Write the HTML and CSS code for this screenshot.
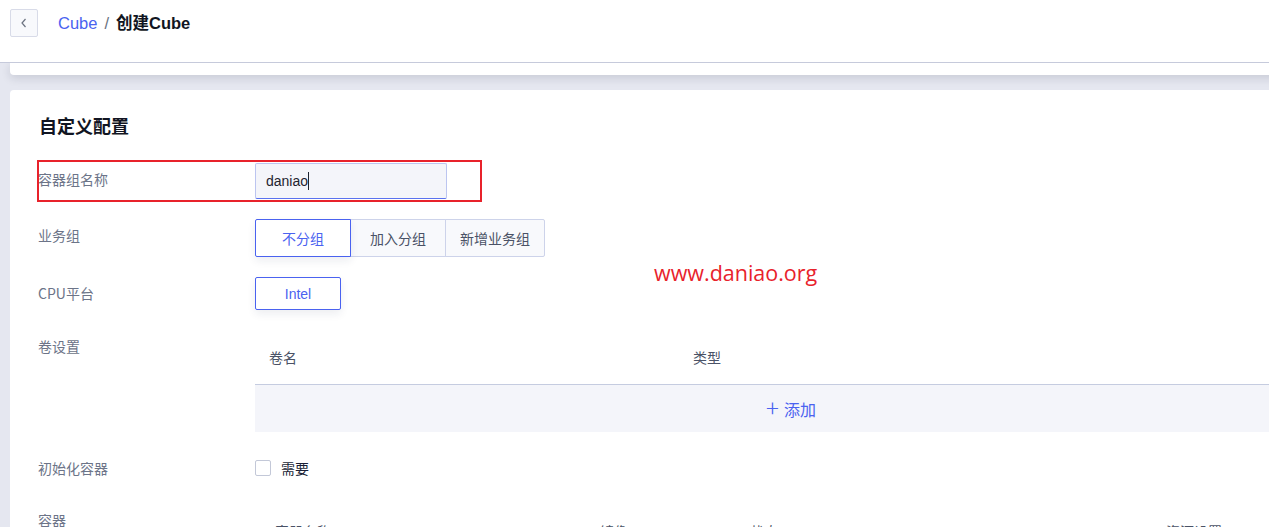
FILE: index.html
```html
<!DOCTYPE html>
<html lang="zh">
<head>
<meta charset="utf-8">
<title>创建Cube</title>
<link rel="stylesheet" href="styles.css">
</head>
<body>
<header class="topbar">
  <button class="back" aria-label="返回">
    <svg width="10" height="12" viewBox="0 0 10 12"><path d="M6.5 2 L3 6 L6.5 10" fill="none" stroke="#6b7280" stroke-width="1.2"/></svg>
  </button>
  <nav class="crumbs">
    <a class="crumb-link">Cube</a>
    <span class="crumb-sep">/</span>
    <span class="crumb-cur">创建Cube</span>
  </nav>
</header>
<main class="main">
  <div class="card stub"></div>
  <section class="card form-card">
    <h2 class="title">自定义配置</h2>
    <div class="row row-name">
      <div class="label">容器组名称</div>
      <div class="control">
        <div class="input"><span class="input-text">daniao</span></div>
      </div>
      <div class="mark"></div>
    </div>
    <div class="row">
      <div class="label">业务组</div>
      <div class="control">
        <div class="seg">
          <span class="seg-btn active w96">不分组</span>
          <span class="seg-btn w95">加入分组</span>
          <span class="seg-btn w99">新增业务组</span>
        </div>
      </div>
    </div>
    <div class="row">
      <div class="label">CPU平台</div>
      <div class="control">
        <span class="single-btn">Intel</span>
      </div>
    </div>
    <div class="row">
      <div class="label">卷设置</div>
      <div class="control">
        <div class="vtable">
          <div class="vhead">
            <span>卷名</span>
            <span>类型</span>
            <span></span>
          </div>
          <div class="vadd"><span class="plus">+</span>添加</div>
        </div>
      </div>
    </div>
    <div class="row">
      <div class="label">初始化容器</div>
      <div class="control check-line">
        <span class="checkbox"></span>
        <span class="check-text">需要</span>
      </div>
    </div>
    <div class="row">
      <div class="label">容器</div>
      <div class="control">
        <div class="chead">
          <span class="c1">容器名称</span>
          <span class="c2">镜像</span>
          <span class="c3">状态</span>
          <span class="c4">资源设置</span>
        </div>
      </div>
    </div>
  </section>
</main>
<div class="watermark">www.daniao.org</div>
</body>
</html>
```
FILE: styles.css
```css
* { box-sizing: border-box; }
html, body {
  margin: 0;
  padding: 0;
  width: 1269px;
  height: 527px;
  overflow: hidden;
}
body {
  background: #e5e7f0;
  font-family: "Liberation Sans", "Noto Sans CJK SC", sans-serif;
  color: #1f2430;
  position: relative;
}
.topbar {
  height: 63px;
  background: #fff;
  border-bottom: 1px solid #c6cadb;
  display: flex;
  align-items: flex-start;
  padding: 9px 0 0 10px;
  position: relative;
  z-index: 2;
}
.back {
  width: 28px;
  height: 28px;
  border: 1px solid #d8dbe8;
  border-radius: 2px;
  background: #f8f9fc;
  display: flex;
  align-items: center;
  justify-content: center;
  padding: 0;
}
.crumbs {
  margin-left: 20px;
  display: flex;
  align-items: center;
  height: 28px;
  font-size: 16.5px;
  line-height: 28px;
}
.crumb-link { color: #4a62f0; }
.crumb-sep { color: #6b7280; margin: 0 7px 0 7px; }
.crumb-cur { font-weight: bold; color: #111522; }

.main {
  width: 1400px;
  padding-left: 10px;
}
.card {
  background: #fff;
}
.stub {
  height: 12px;
  border-radius: 0 0 4px 4px;
  box-shadow: 0 3px 10px rgba(20, 25, 50, 0.14);
  margin-bottom: 15px;
  position: relative;
  z-index: 1;
}
.form-card {
  border-radius: 4px 4px 0 0;
  padding: 22px 0 40px 28px;
}
.title {
  margin: 0 0 25px 1px;
  font-size: 18px;
  line-height: 26px;
  font-weight: bold;
  color: #111522;
  font-family: "Noto Sans CJK SC", sans-serif;
}
.row {
  display: grid;
  grid-template-columns: 217px 1fr;
  margin-bottom: 20px;
  position: relative;
}
.label {
  font-size: 14px;
  line-height: 32px;
  color: #6c7488;
  font-family: "Noto Sans CJK SC", sans-serif;
}
.control { display: flex; }
.input {
  width: 192px;
  height: 36px;
  background: #f4f5fa;
  border: 1px solid #bcc5f0;
  border-bottom-color: #5a72ef;
  border-radius: 2px;
  padding: 0 10px;
  display: flex;
  align-items: center;
  font-size: 14px;
  color: #1f2430;
}
.input-text { border-right: 1px solid #1f2430; line-height: 18px; }
.mark {
  position: absolute;
  left: -1px;
  top: -3px;
  width: 445px;
  height: 42px;
  border: 2px solid #e8222b;
  pointer-events: none;
}
.seg { display: flex; }
.seg-btn {
  height: 38px;
  display: flex;
  align-items: center;
  justify-content: center;
  font-size: 14px;
  color: #4a5266;
  background: #f8f9fc;
  border: 1px solid #cdd3ea;
  margin-left: -1px;
  font-family: "Noto Sans CJK SC", sans-serif;
}
.seg-btn:first-child { margin-left: 0; border-radius: 2px 0 0 2px; }
.seg-btn:last-child { border-radius: 0 2px 2px 0; }
.seg-btn.active {
  background: #fff;
  color: #4a62f0;
  border-color: #4a62f0;
  box-shadow: 0 4px 8px rgba(30, 40, 80, 0.08);
  position: relative;
  z-index: 1;
}
.w96 { width: 96px; }
.w95 { width: 96px; }
.w99 { width: 100px; }
.single-btn {
  width: 86px;
  height: 33px;
  display: flex;
  align-items: center;
  justify-content: center;
  background: #fff;
  border: 1px solid #4a62f0;
  border-radius: 2px;
  color: #4a62f0;
  font-size: 14px;
  box-shadow: 0 4px 8px rgba(30, 40, 80, 0.08);
}
.vtable { width: 1072px; }
.vhead {
  height: 55px;
  display: grid;
  grid-template-columns: 424px 424px 1fr;
  align-items: center;
  padding-left: 14px;
  border-bottom: 1px solid #c5cce0;
  font-size: 14px;
  color: #4a5266;
  font-family: "Noto Sans CJK SC", sans-serif;
}
.vadd {
  height: 47px;
  background: #f4f5fa;
  display: flex;
  align-items: center;
  justify-content: center;
  color: #4a62f0;
  font-size: 16px;
  font-family: "Noto Sans CJK SC", sans-serif;
}
.plus { font-size: 24px; font-weight: 200; margin-right: 5px; line-height: 1; margin-top: -3px; }
.check-line { align-items: center; height: 32px; }
.checkbox {
  width: 16px;
  height: 16px;
  border: 1px solid #c3c8d8;
  border-radius: 2px;
  background: #fff;
}
.check-text {
  margin-left: 10px;
  font-size: 14px;
  color: #1a1f36;
  font-family: "Noto Sans CJK SC", sans-serif;
}
.chead {
  height: 54px;
  width: 1072px;
  font-size: 14px;
  color: #4a5266;
  font-family: "Noto Sans CJK SC", sans-serif;
  display: flex;
  align-items: center;
}
.chead span { display: block; }
.c1 { margin-left: 20px; width: 325px; }
.c2 { width: 150px; }
.c3 { width: 416px; }
.watermark {
  position: absolute;
  left: 654px;
  top: 258px;
  font-family: "Open Sans", "Noto Sans", sans-serif;
  font-size: 21.5px;
  color: #e8222b;
  z-index: 5;
}
```
